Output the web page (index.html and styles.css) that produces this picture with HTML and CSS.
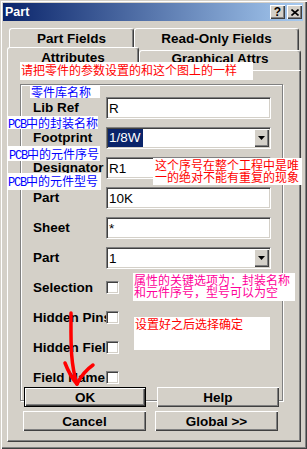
FILE: index.html
```html
<!DOCTYPE html>
<html lang="zh-CN">
<head>
<meta charset="UTF-8">
<title>Part</title>
<link rel="stylesheet" href="styles.css">
</head>
<body>
<div class="window">
	<!-- 标题栏 -->
	<div class="titlebar">
		<span class="title">Part</span>
		<span class="tbtn">?</span>
		<span class="tbtn"><svg width="8" height="7" viewBox="0 0 8 7"><path d="M0.5 0.5 L7.5 6.5 M7.5 0.5 L0.5 6.5" stroke="#000" stroke-width="1.6"/></svg></span>
	</div>
	<!-- 两排选项卡 -->
	<div class="tabrow back">
		<div class="tab t1">Part Fields</div>
		<div class="tab t2">Read-Only Fields</div>
	</div>
	<div class="tabrow front">
		<div class="tab t3 cur">Attributes</div>
		<div class="tab t4">Graphical Attrs</div>
	</div>
	<div class="panel">
		<div class="group">
			<div class="row"><span class="lbl">Lib Ref</span><div class="edit">R</div></div>
			<div class="row"><span class="lbl">Footprint</span><div class="edit combo"><span class="hl">1/8W</span><span class="dd"><svg width="7" height="4" viewBox="0 0 7 4"><polygon points="0,0 7,0 3.5,4" fill="#000"/></svg></span></div></div>
			<div class="row"><span class="lbl">Designator</span><div class="edit">R1</div></div>
			<div class="row"><span class="lbl">Part</span><div class="edit">10K</div></div>
			<div class="row"><span class="lbl">Sheet</span><div class="edit">*</div></div>
			<div class="row"><span class="lbl">Part</span><div class="edit combo">1<span class="dd"><svg width="7" height="4" viewBox="0 0 7 4"><polygon points="0,0 7,0 3.5,4" fill="#000"/></svg></span></div></div>
			<div class="row chk"><span class="lbl">Selection</span><span class="cb"></span></div>
			<div class="row chk"><span class="lbl">Hidden Pins</span><span class="cb"></span></div>
			<div class="row chk"><span class="lbl">Hidden Fields</span><span class="cb"></span></div>
			<div class="row chk"><span class="lbl">Field Name</span><span class="cb"></span></div>
			<div class="btns first"><span class="btn def">OK</span><span class="btn">Help</span></div>
		</div>
		<div class="btns second"><span class="btn">Cancel</span><span class="btn">Global &gt;&gt;</span></div>
	</div>

	<!-- 说明文字 -->
	<div class="note red n1">请把零件的参数设置的和这个图上的一样</div>
	<div class="note blue n2">零件库名称</div>
	<div class="note blue n3"><span class="en">PCB</span>中的封装名称</div>
	<div class="note blue n4"><span class="en">PCB</span>中的元件序号</div>
	<div class="note blue n5"><span class="en">PCB</span>中的元件型号</div>
	<div class="note red n6">这个序号在整个工程中是唯<br>一的绝对不能有重复的现象</div>
	<div class="note pink n7">属性的关键选项为：封装名称<br>和元件序号，型号可以为空</div>
	<div class="note red n8">设置好之后选择确定</div>

	<svg class="arrow" width="307" height="449" viewBox="0 0 307 449">
		<g fill="none" stroke="#ff0000" stroke-width="3.5" stroke-linecap="round">
			<path d="M71 313 C71 340 70 362 77 384"/>
			<path d="M65 363 Q70 376 77 384"/>
			<path d="M93 365 Q83 372 77 384"/>
		</g>
	</svg>
</div>
</body>
</html>
```
FILE: styles.css
```css
*{margin: 0;padding: 0;box-sizing: border-box;}
body{
	background: #d4d0c8;
	font: bold 13.5px "Liberation Sans", Arial, sans-serif;
	color: #000;
}
.window{
	position: relative;
	width: 307px;
	height: 449px;
	padding: 3px 4px 0 3px;
	background: #d4d0c8;
	box-shadow: inset 1px 1px 0 #d4d0c8, inset 2px 2px 0 #fff, inset -1px -1px 0 #404040, inset -2px -2px 0 #808080;
	overflow: hidden;
}
.titlebar{
	display: flex;
	align-items: center;
	height: 18px;
	padding: 0 1px 0 2px;
	background: linear-gradient(to right, #0a246a, #a6caf0);
	color: #fff;
}
.titlebar .title{flex: 1;font-size: 12.5px;}
.titlebar .tbtn{
	display: flex;
	align-items: center;
	justify-content: center;
	width: 15px;
	height: 14px;
	margin-left: 2px;
	background: #d4d0c8;
	color: #000;
	font-size: 12px;
	line-height: 14px;
	box-shadow: inset 1px 1px 0 #fff, inset -1px -1px 0 #404040, inset -2px -2px 0 #808080;
}
.tabrow{display: flex;}
.tab{
	border: 1px solid;
	border-color: #fff #404040 transparent #fff;
	border-bottom: none;
	border-radius: 3px 3px 0 0;
	box-shadow: inset -1px 0 0 #808080;
	background: #d4d0c8;
	text-align: center;
	white-space: nowrap;
	overflow: hidden;
}
.back{margin: 7px 0 0 6px;}
.back .tab{height: 22px;line-height: 17px;padding-top: 1px;}
.t1{width: 125px;}
.t2{width: 165px;}
.front{margin: -3px 0 0 4px;height: 23px;align-items: flex-start;}
.t3{width: 132px;height: 25px;line-height: 19px;position: relative;z-index: 1;}
.t4{width: 162px;height: 20px;margin-top: 3px;line-height: 16px;}
.panel{
	width: 294px;
	height: 372px;
	margin-left: 4px;
	padding: 13px 0 0 12px;
	border: 1px solid;
	border-color: #fff #404040 #404040 #fff;
	box-shadow: inset -1px -1px 0 #808080;
}
.group{
	width: 263px;
	padding: 12px 11px 0 12px;
	border: 1px solid #808080;
	box-shadow: 1px 1px 0 #fff, inset 1px 1px 0 #fff;
}
.row{display: flex;align-items: center;height: 22px;}
.row + .row{margin-top: 8px;}
.lbl{
	flex: none;
	width: 73px;
	overflow: hidden;
	white-space: nowrap;
	line-height: 22px;
}
.edit{
	display: flex;
	align-items: center;
	width: 165px;
	height: 22px;
	padding: 0 1px 0 2px;
	border: 1px solid;
	border-color: #808080 #fff #fff #808080;
	box-shadow: inset 1px 1px 0 #404040, inset -1px -1px 0 #d4d0c8;
	background: #fff;
	font-weight: normal;
	font-size: 13.5px;
}
.combo .hl{
	margin-left: -1px;
	padding: 0 2px 0 1px;
	line-height: 18px;
	background: #0a246a;
	color: #fff;
}
.combo .dd{
	display: flex;
	align-items: center;
	justify-content: center;
	width: 15px;
	height: 18px;
	margin-left: auto;
	background: #d4d0c8;
	box-shadow: inset 1px 1px 0 #fff, inset -1px -1px 0 #404040, inset -2px -2px 0 #808080;
}
.chk{align-items: flex-start;}
.chk .cb{
	width: 13px;
	height: 13px;
	margin-top: 4px;
	border: 1px solid;
	border-color: #808080 #fff #fff #808080;
	box-shadow: inset 1px 1px 0 #404040, inset -1px -1px 0 #d4d0c8;
	background: #fff;
}
.btns{display: flex;}
.btns .btn{
	display: flex;
	align-items: center;
	justify-content: center;
	height: 20px;
	background: #d4d0c8;
	box-shadow: inset 1px 1px 0 #fff, inset -1px -1px 0 #404040, inset -2px -2px 0 #808080;
}
.first{margin: -2px -9px -7px;gap: 11px;}
.first .btn{width: 122px;}
.first .def{box-shadow: inset 0 0 0 1px #000, inset 2px 2px 0 #fff, inset -2px -2px 0 #404040, inset -3px -3px 0 #808080;}
.second{margin: 10px 0 0 3px;gap: 9px;}
.second .btn{width: 123px;}

.note{
	position: absolute;
	z-index: 2;
	background: #fff;
	font: normal 12px/13px "Noto Sans CJK SC", sans-serif;
	white-space: nowrap;
}
.note .en{font-family: "Liberation Mono", monospace;letter-spacing: -1.2px;}
.red{color: #ff0000;}
.blue{color: #0000ff;}
.pink{color: #ff0099;}
.n1{left: 20px;top: 62px;width: 233px;height: 18px;padding-left: 1px;line-height: 15px;}
.n2{left: 30px;top: 85px;width: 70px;height: 13px;padding-left: 1px;}
.n3{left: 7px;top: 116px;width: 91px;height: 13px;padding-left: 1px;}
.n4{left: 8px;top: 146px;width: 92px;height: 15px;padding-left: 1px;line-height: 15px;}
.n5{left: 7px;top: 173px;width: 94px;height: 17px;padding-left: 1px;line-height: 16px;}
.n6{left: 153px;top: 158px;width: 149px;height: 27px;padding: 1px 0 0 2px;line-height: 12px;}
.n7{left: 133px;top: 273px;width: 162px;height: 28px;padding: 1px 0 0 1px;line-height: 12px;}
.n8{left: 134px;top: 317px;width: 136px;height: 33px;padding: 1px 0 0 1px;line-height: 12px;}
.arrow{position: absolute;z-index: 3;left: 0;top: 0;pointer-events: none;}
```
